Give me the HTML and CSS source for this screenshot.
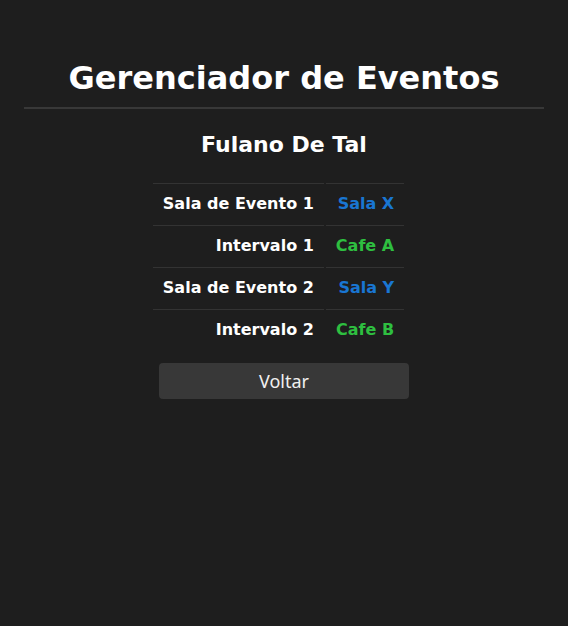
FILE: index.html
```html
<!DOCTYPE html>
<html lang="pt">
<head>
<meta charset="utf-8">
<title>Gerenciador de Eventos</title>
<link rel="stylesheet" href="styles.css">
</head>
<body>
<main class="page">
  <h1 class="title">Gerenciador de Eventos</h1>
  <hr class="divider">
  <h2 class="name">Fulano De Tal</h2>
  <table class="schedule">
    <tbody>
      <tr><th>Sala de Evento 1</th><td class="room">Sala X</td></tr>
      <tr><th>Intervalo 1</th><td class="cafe">Cafe A</td></tr>
      <tr><th>Sala de Evento 2</th><td class="room">Sala Y</td></tr>
      <tr><th>Intervalo 2</th><td class="cafe">Cafe B</td></tr>
    </tbody>
  </table>
  <button class="back" type="button">Voltar</button>
</main>
</body>
</html>
```

FILE: styles.css
```css
html, body {
  margin: 0;
  padding: 0;
  background: #1e1e1e;
  height: 100%;
}
body {
  font-family: "DejaVu Sans", sans-serif;
  color: #ffffff;
}
.page {
  display: flex;
  flex-direction: column;
  align-items: center;
  padding: 59px 24px 0;
}
.title {
  margin: 0;
  font-size: 32px;
  line-height: 38px;
  font-weight: bold;
}
.divider {
  align-self: stretch;
  margin: 10px 0 0;
  border: 0;
  height: 2px;
  background: #383838;
}
.name {
  margin: 23px 0 0;
  font-size: 22px;
  line-height: 26px;
  font-weight: bold;
}
.schedule {
  margin: 25px 11px 0 0;
  border-collapse: separate;
  border-spacing: 2px 0;
  font-size: 16px;
  font-weight: bold;
}
.schedule th,
.schedule td {
  height: 39px;
  padding: 0 10px 2px;
  border-top: 1px solid #333333;
  text-align: right;
  vertical-align: middle;
  white-space: nowrap;
}
.schedule th {
  width: 151px;
  color: #ffffff;
}
.schedule td {
  width: 58px;
}
.room { color: #1976d2; }
.cafe { color: #2ebf40; }
.back {
  margin-top: 12px;
  width: 250px;
  height: 36px;
  border: 0;
  border-radius: 4px;
  background: #383838;
  color: #f0f0f0;
  font-family: "Noto Sans", "Open Sans", sans-serif;
  font-size: 18px;
  cursor: pointer;
}
```
